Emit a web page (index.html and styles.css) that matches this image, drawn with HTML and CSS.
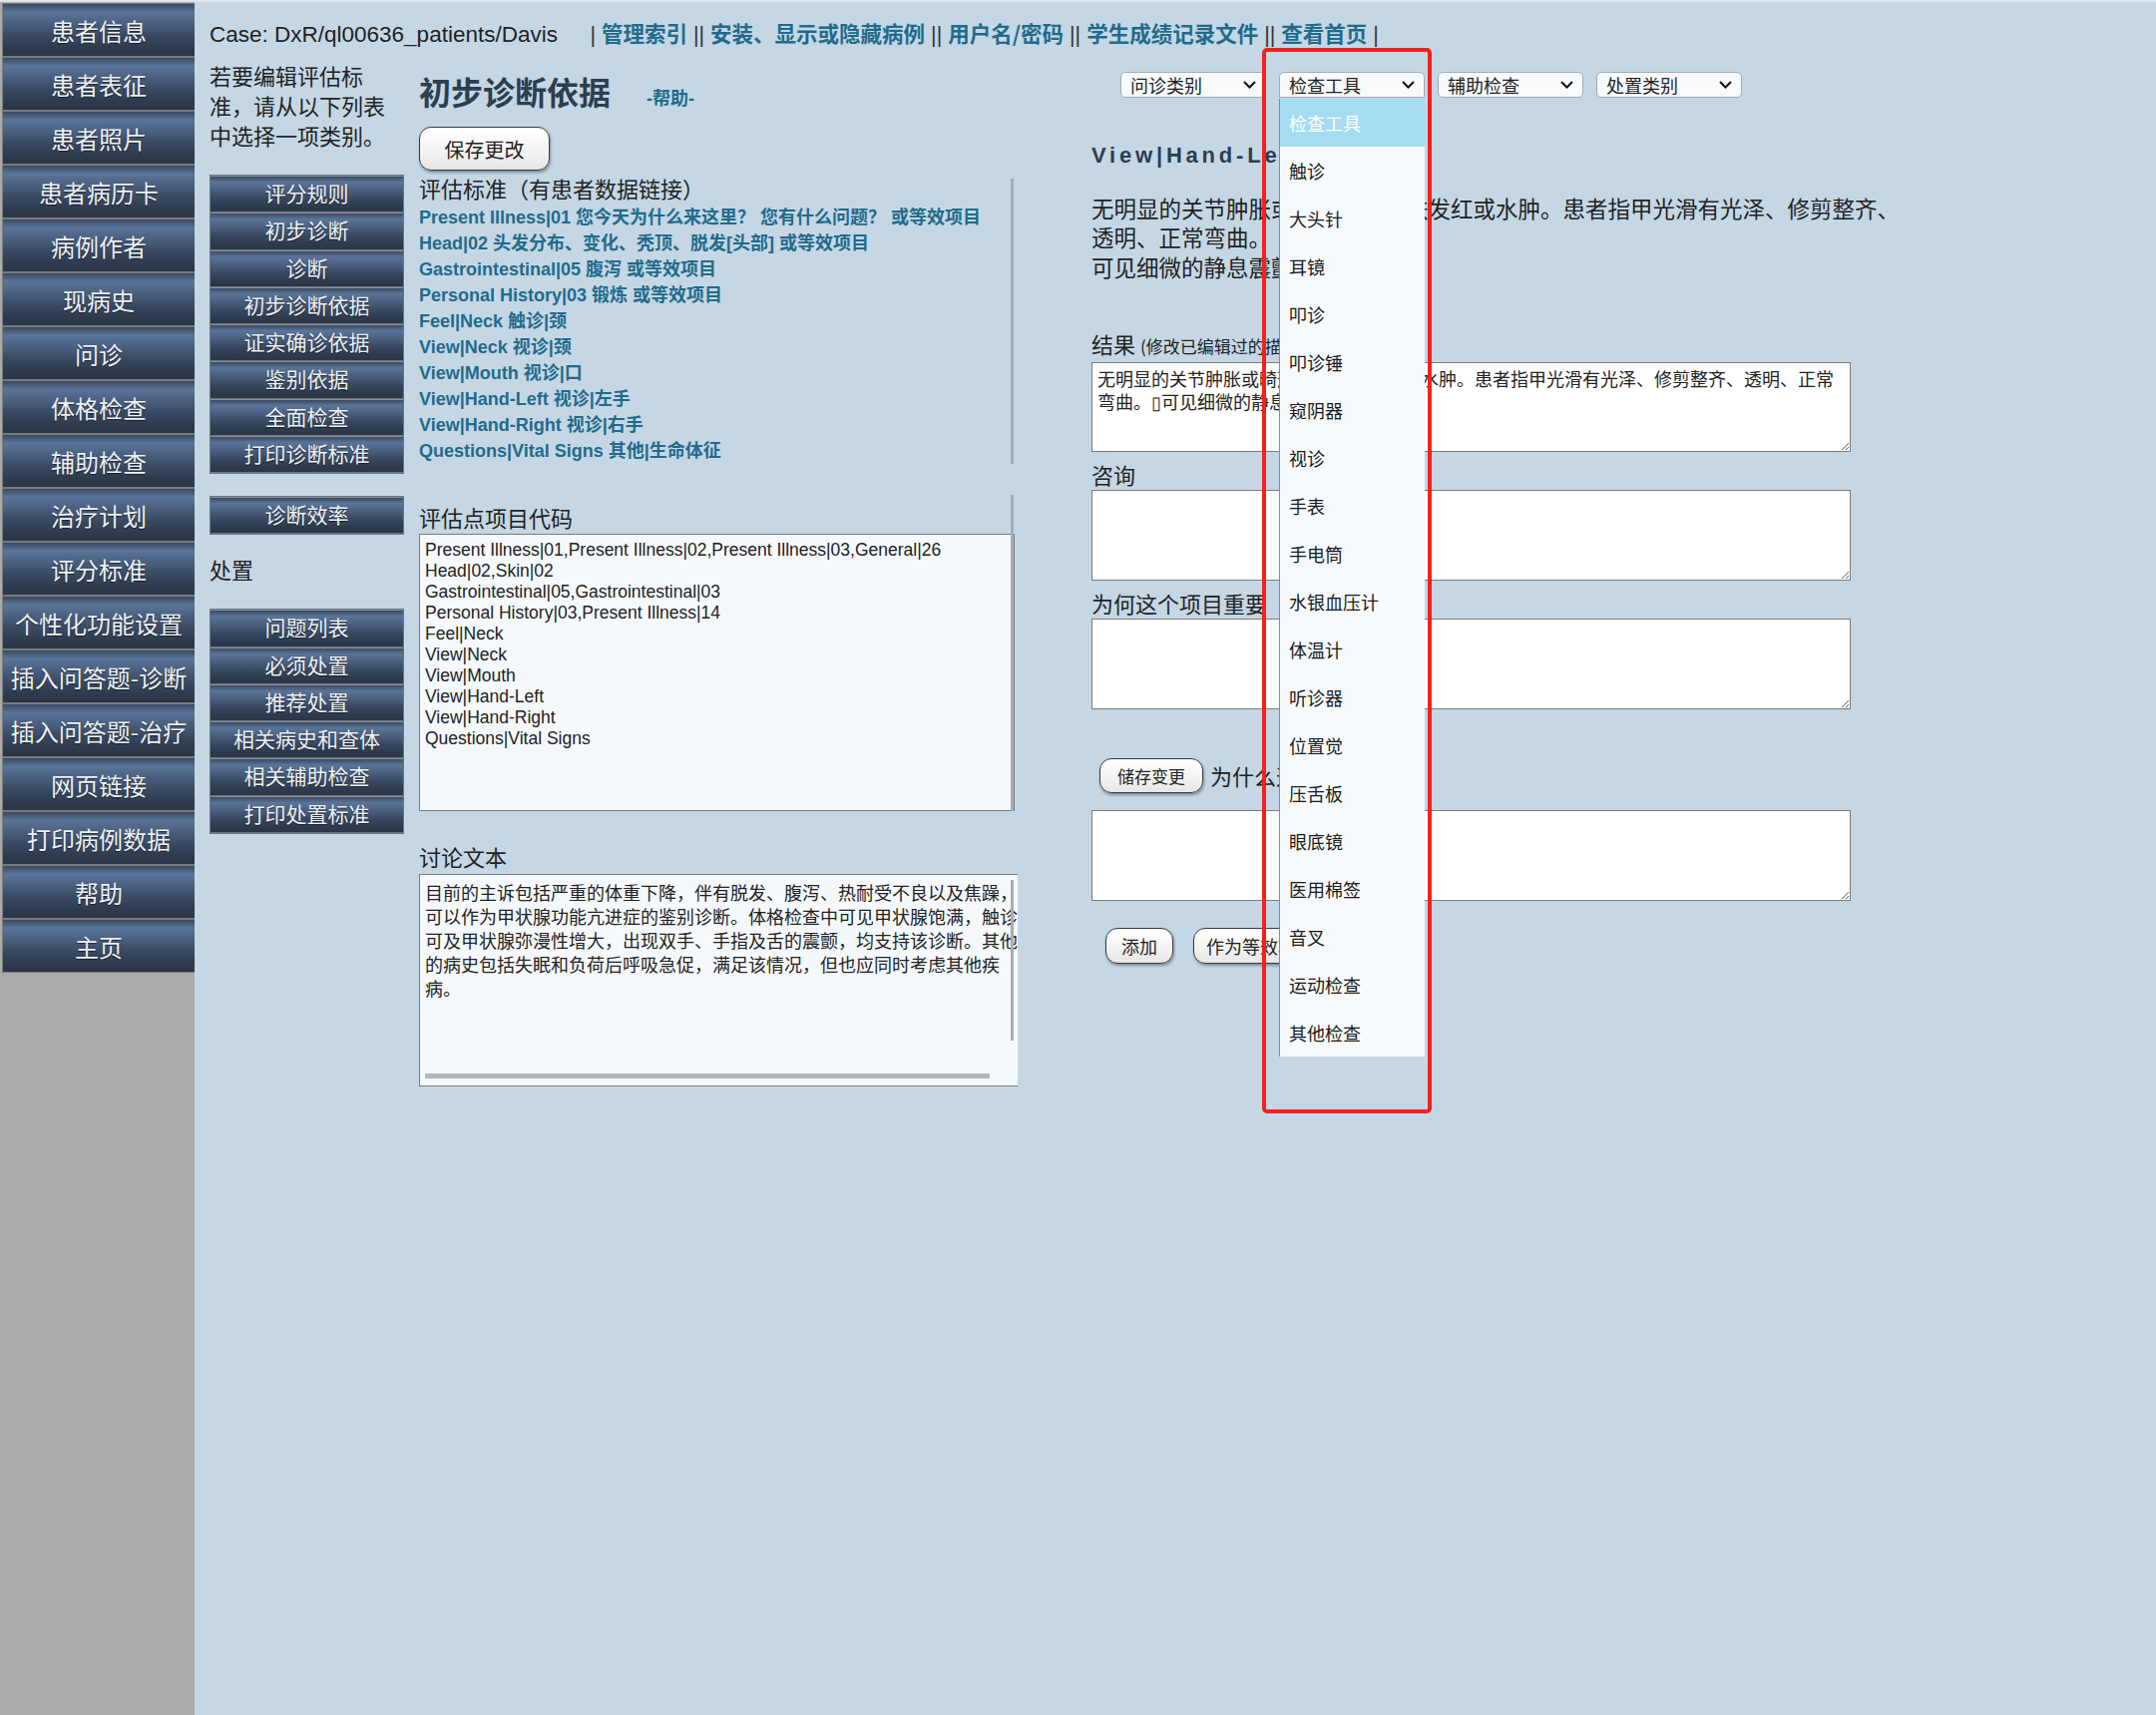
FILE: index.html
```html
<!DOCTYPE html>
<html lang="zh-CN">
<head>
<meta charset="utf-8">
<title>初步诊断依据</title>
<link rel="stylesheet" href="styles.css">
</head>
<body>
<div class="page">
  <nav class="sidebar">
    <a class="side-btn">患者信息</a>
    <a class="side-btn">患者表征</a>
    <a class="side-btn">患者照片</a>
    <a class="side-btn">患者病历卡</a>
    <a class="side-btn">病例作者</a>
    <a class="side-btn">现病史</a>
    <a class="side-btn">问诊</a>
    <a class="side-btn">体格检查</a>
    <a class="side-btn">辅助检查</a>
    <a class="side-btn">治疗计划</a>
    <a class="side-btn">评分标准</a>
    <a class="side-btn">个性化功能设置</a>
    <a class="side-btn">插入问答题-诊断</a>
    <a class="side-btn">插入问答题-治疗</a>
    <a class="side-btn">网页链接</a>
    <a class="side-btn">打印病例数据</a>
    <a class="side-btn">帮助</a>
    <a class="side-btn">主页</a>
  </nav>

  <main class="main">
    <header class="topbar">
      <span class="case">Case: DxR/ql00636_patients/Davis</span>
      <span class="toplinks">| <a>管理索引</a> || <a>安装、显示或隐藏病例</a> || <a>用户名/密码</a> || <a>学生成绩记录文件</a> || <a>查看首页</a> |</span>
    </header>

    <div class="columns">
      <aside class="col-menu">
        <p class="intro">若要编辑评估标准，请从以下列表中选择一项类别。</p>
        <div class="menu-group">
          <a class="sub-btn">评分规则</a>
          <a class="sub-btn">初步诊断</a>
          <a class="sub-btn">诊断</a>
          <a class="sub-btn">初步诊断依据</a>
          <a class="sub-btn">证实确诊依据</a>
          <a class="sub-btn">鉴别依据</a>
          <a class="sub-btn">全面检查</a>
          <a class="sub-btn">打印诊断标准</a>
        </div>
        <div class="menu-group">
          <a class="sub-btn">诊断效率</a>
        </div>
        <div class="menu-label">处置</div>
        <div class="menu-group">
          <a class="sub-btn">问题列表</a>
          <a class="sub-btn">必须处置</a>
          <a class="sub-btn">推荐处置</a>
          <a class="sub-btn">相关病史和查体</a>
          <a class="sub-btn">相关辅助检查</a>
          <a class="sub-btn">打印处置标准</a>
        </div>
      </aside>

      <section class="col-edit">
        <div class="title-row">
          <h1 class="title">初步诊断依据</h1>
          <a class="help">-帮助-</a>
        </div>
        <button class="pill-btn save-btn">保存更改</button>

        <div class="sec sec-criteria">
          <div class="sec-title">评估标准（有患者数据链接）</div>
          <a class="crit">Present Illness|01 您今天为什么来这里？ 您有什么问题？ 或等效项目</a>
          <a class="crit">Head|02 头发分布、变化、秃顶、脱发[头部] 或等效项目</a>
          <a class="crit">Gastrointestinal|05 腹泻 或等效项目</a>
          <a class="crit">Personal History|03 锻炼 或等效项目</a>
          <a class="crit">Feel|Neck 触诊|颈</a>
          <a class="crit">View|Neck 视诊|颈</a>
          <a class="crit">View|Mouth 视诊|口</a>
          <a class="crit">View|Hand-Left 视诊|左手</a>
          <a class="crit">View|Hand-Right 视诊|右手</a>
          <a class="crit">Questions|Vital Signs 其他|生命体征</a>
        </div>

        <div class="sec sec-codes">
          <div class="sec-label">评估点项目代码</div>
          <textarea class="codes">Present Illness|01,Present Illness|02,Present Illness|03,General|26
Head|02,Skin|02
Gastrointestinal|05,Gastrointestinal|03
Personal History|03,Present Illness|14
Feel|Neck
View|Neck
View|Mouth
View|Hand-Left
View|Hand-Right
Questions|Vital Signs</textarea>
        </div>

        <div class="sec sec-discuss">
          <div class="sec-label">讨论文本</div>
          <div class="discuss">
            <div class="discuss-text">
              <div>目前的主诉包括严重的体重下降，伴有脱发、腹泻、热耐受不良以及焦躁，</div>
              <div>可以作为甲状腺功能亢进症的鉴别诊断。体格检查中可见甲状腺饱满，触诊</div>
              <div>可及甲状腺弥漫性增大，出现双手、手指及舌的震颤，均支持该诊断。其他</div>
              <div>的病史包括失眠和负荷后呼吸急促，满足该情况，但也应同时考虑其他疾</div>
              <div>病。</div>
            </div>
            <div class="hbar"></div>
          </div>
        </div>
      </section>

      <section class="col-detail">
        <div class="select-row">
          <div class="fake-select"><span>问诊类别</span><svg width="13" height="8" viewBox="0 0 13 8"><path d="M1 1l5.5 5.5L12 1" fill="none" stroke="#111" stroke-width="2"/></svg></div>
          <div class="fake-select open"><span>检查工具</span><svg width="13" height="8" viewBox="0 0 13 8"><path d="M1 1l5.5 5.5L12 1" fill="none" stroke="#111" stroke-width="2"/></svg>
            <ul class="dropdown">
              <li class="active">检查工具</li>
              <li>触诊</li>
              <li>大头针</li>
              <li>耳镜</li>
              <li>叩诊</li>
              <li>叩诊锤</li>
              <li>窥阴器</li>
              <li>视诊</li>
              <li>手表</li>
              <li>手电筒</li>
              <li>水银血压计</li>
              <li>体温计</li>
              <li>听诊器</li>
              <li>位置觉</li>
              <li>压舌板</li>
              <li>眼底镜</li>
              <li>医用棉签</li>
              <li>音叉</li>
              <li>运动检查</li>
              <li>其他检查</li>
            </ul>
            <div class="annot"></div>
          </div>
          <div class="fake-select"><span>辅助检查</span><svg width="13" height="8" viewBox="0 0 13 8"><path d="M1 1l5.5 5.5L12 1" fill="none" stroke="#111" stroke-width="2"/></svg></div>
          <div class="fake-select"><span>处置类别</span><svg width="13" height="8" viewBox="0 0 13 8"><path d="M1 1l5.5 5.5L12 1" fill="none" stroke="#111" stroke-width="2"/></svg></div>
        </div>

        <h2 class="item-title">View|Hand-Left 视诊|左手</h2>
        <p class="item-desc">无明显的关节肿胀或畸形，无皮肤发红或水肿。患者指甲光滑有光泽、修剪整齐、透明、正常弯曲。<br>可见细微的静息震颤。</p>

        <div class="f-label label-result">结果 <small>(修改已编辑过的描述)</small></div>
        <textarea class="field h90">无明显的关节肿胀或畸形，无皮肤发红或水肿。患者指甲光滑有光泽、修剪整齐、透明、正常
弯曲。▯可见细微的静息震颤。</textarea>

        <div class="f-label">咨询</div>
        <textarea class="field h91"></textarea>

        <div class="f-label">为何这个项目重要</div>
        <textarea class="field h91"></textarea>

        <div class="btn-row row-save">
          <button class="pill-btn small-btn store-btn">储存变更</button>
          <span class="why">为什么这很重要</span>
        </div>
        <textarea class="field h91 after-save"></textarea>

        <div class="btn-row row-add">
          <button class="pill-btn small-btn add-btn">添加</button>
          <button class="pill-btn small-btn equiv-btn">作为等效项目添加</button>
        </div>
      </section>
    </div>
  </main>
</div>
</body>
</html>
```

FILE: styles.css
```css
* { box-sizing: border-box; }

html, body {
  margin: 0;
  padding: 0;
}

body {
  font-family: "Liberation Sans", "Noto Sans CJK SC", sans-serif;
  color: #222;
  background: #c5d7e5;
}

.page {
  display: flex;
  min-height: 1719px;
  border-top: 2px solid #e1e6eb;
}

/* ---------- left sidebar ---------- */
.sidebar {
  width: 195px;
  flex: none;
  background: #aaaaaa;
  padding: 1px 0 0 2px;
  display: flex;
  flex-direction: column;
}

.side-btn,
.sub-btn {
  display: flex;
  align-items: center;
  justify-content: center;
  color: #eef1f5;
  text-shadow: 0 1px 1px rgba(0, 0, 0, 0.55);
  font-family: "Noto Sans CJK SC", sans-serif;
  background: linear-gradient(to bottom,
    #3b4961 0%,
    #5a7599 16%,
    #4d6384 34%,
    #3a4a63 60%,
    #2e3a4e 85%,
    #2b3647 100%);
  white-space: nowrap;
}

.side-btn {
  height: 54px;
  font-size: 24px;
  border: 1px solid #7b7b7b;
  border-right: none;
}

/* ---------- main ---------- */
.main {
  flex: 1;
  padding-left: 15px;
}

.topbar {
  height: 46px;
  padding-top: 17px;
  line-height: 28px;
  white-space: nowrap;
}

.case {
  font-size: 22.5px;
  color: #222;
}

.toplinks {
  margin-left: 28px;
  font-size: 21.5px;
  color: #333;
}

.toplinks a {
  font-weight: bold;
  color: #1f6b8c;
  font-family: "Noto Sans CJK SC", sans-serif;
}

.columns {
  display: flex;
  align-items: flex-start;
  margin-top: 15px;
}

/* ---------- column: category menu ---------- */
.col-menu {
  width: 195px;
  flex: none;
  margin-right: 15px;
}

.intro {
  margin: 0;
  font-size: 22px;
  line-height: 30px;
  color: #222;
}

.menu-group {
  margin-top: 22px;
  border: 1px solid #6c7686;
}

.sub-btn {
  height: 37.25px;
  padding-bottom: 3px;
  font-size: 21px;
  border-top: 1px solid #8a8f96;
  border-bottom: 1px solid #6d7480;
}

.menu-label {
  margin-top: 22px;
  font-size: 22px;
  line-height: 30px;
}

/* ---------- column: editor ---------- */
.col-edit {
  width: 600px;
  flex: none;
  margin-right: 74px;
}

.title-row {
  display: flex;
  align-items: baseline;
  margin-top: 8px;
}

.title {
  margin: 0;
  font-size: 32px;
  line-height: 40px;
  font-weight: bold;
  color: #2c3e50;
  font-family: "Noto Sans CJK SC", sans-serif;
}

.help {
  margin-left: 36px;
  font-size: 18px;
  font-weight: bold;
  color: #1f6b8c;
}

.pill-btn {
  display: flex;
  align-items: center;
  justify-content: center;
  padding: 0;
  border: 1px solid #3a3a3a;
  border-radius: 12px;
  background: linear-gradient(to bottom, #ffffff 0%, #f4f4f4 55%, #e6e6e6 100%);
  box-shadow: 1px 2px 3px rgba(0, 0, 0, 0.35);
  color: #222;
  font-family: "Noto Sans CJK SC", sans-serif;
}

.save-btn {
  margin-top: 16px;
  width: 131px;
  height: 44px;
  font-size: 20px;
}

.sec {
  position: relative;
}

.sec::after {
  content: "";
  position: absolute;
  right: 4px;
  top: 0;
  bottom: 0;
  width: 3px;
  background: #a9acb0;
}

.sec-criteria {
  margin-top: 8px;
}

.sec-title {
  font-size: 22px;
  line-height: 24px;
  margin-bottom: 2px;
  color: #222;
}

.crit {
  display: block;
  font-size: 18px;
  line-height: 26px;
  font-weight: bold;
  color: #1f6b8c;
  white-space: nowrap;
}

.sec-codes {
  margin-top: 31px;
  padding-top: 11px;
}

.sec-label {
  font-size: 22px;
  line-height: 28px;
  color: #222;
}

.codes {
  display: block;
  margin: 0;
  width: 597px;
  height: 278px;
  padding: 5px 5px;
  border: 1px solid #7a7a7a;
  background: #f5f9fc;
  font-family: "Liberation Sans", "Noto Sans CJK SC", sans-serif;
  font-size: 17.5px;
  line-height: 21px;
  color: #222;
  resize: none;
  overflow: hidden;
}

.sec-discuss {
  margin-top: 34px;
}

.sec-discuss::after {
  top: 35px;
  bottom: auto;
  height: 161px;
}

.discuss {
  margin-top: 1px;
  width: 600px;
  height: 213px;
  border: 1px solid #7a7a7a;
  border-right: none;
  background: #f5f9fc;
  overflow: hidden;
  display: flex;
  flex-direction: column;
}

.discuss-text {
  padding: 5px 0 0 5px;
  font-family: "Noto Sans CJK SC", sans-serif;
  font-size: 18px;
  line-height: 24px;
  white-space: nowrap;
  color: #222;
}

.hbar {
  margin-top: auto;
  margin-bottom: 7px;
  margin-left: 5px;
  width: 566px;
  height: 5px;
  background: #b5b7ba;
}

/* ---------- column: detail ---------- */
.col-detail {
  width: 820px;
  flex: none;
}

.select-row {
  display: flex;
  gap: 13px;
  margin-top: 9px;
  padding-left: 29px;
}

.fake-select {
  position: relative;
  width: 146px;
  height: 26px;
  display: flex;
  align-items: center;
  justify-content: space-between;
  padding: 0 9px 0 9px;
  border: 1px solid #a3abb5;
  border-radius: 5px;
  background: #f8fafc;
  font-family: "Noto Sans CJK SC", sans-serif;
  font-size: 18px;
  color: #222;
}

.fake-select.open {
  border-radius: 5px 5px 0 0;
}

.dropdown {
  position: absolute;
  left: -1px;
  top: calc(100% + 2px);
  width: 146px;
  margin: 0;
  padding: 0;
  list-style: none;
  background: #f6fafd;
  border-left: 1px solid #8a8a8a;
  z-index: 5;
}

.dropdown li {
  height: 48px;
  line-height: 48px;
  padding-left: 9px;
  font-size: 18px;
  color: #1a1a1a;
}

.dropdown li.active {
  background: #a6dcf2;
  color: #ffffff;
}

.annot {
  position: absolute;
  left: -18px;
  top: -25px;
  width: 170px;
  height: 1068px;
  border: 4px solid #f1221c;
  border-radius: 5px;
  z-index: 6;
}

.item-title {
  margin: 43px 0 0;
  font-size: 22px;
  line-height: 30px;
  font-weight: bold;
  letter-spacing: 3.8px;
  color: #2c3e50;
  white-space: nowrap;
}

.item-desc {
  margin: 22.5px 0 0;
  font-family: "Noto Sans CJK SC", sans-serif;
  font-size: 22.5px;
  line-height: 29.5px;
  color: #222;
}

.f-label {
  margin-top: 8px;
  font-family: "Noto Sans CJK SC", sans-serif;
  font-size: 22px;
  line-height: 28px;
  color: #222;
}

.f-label small {
  font-size: 17px;
}

.label-result {
  margin-top: 48px;
}

.field {
  display: block;
  margin: 2px 0 0;
  width: 761px;
  padding: 4px 5px;
  border: 1px solid #7a7a7a;
  background: #ffffff;
  font-family: "Noto Sans CJK SC", sans-serif;
  font-size: 18px;
  line-height: 23px;
  color: #222;
  overflow: hidden;
}

.h90 { height: 90px; }
.h91 { height: 91px; }

.btn-row {
  display: flex;
  align-items: center;
  height: 36px;
}

.row-save {
  margin-top: 48px;
}

.small-btn {
  height: 35px;
  font-size: 17px;
}

.store-btn {
  margin-left: 8px;
  width: 104px;
}

.why {
  margin-left: 7px;
  font-family: "Noto Sans CJK SC", sans-serif;
  font-size: 22px;
}

.after-save {
  margin-top: 17px;
}

.row-add {
  margin-top: 27px;
}

.add-btn {
  margin-left: 14px;
  width: 68px;
  height: 36px;
  font-size: 18px;
}

.equiv-btn {
  margin-left: 20px;
  width: 170px;
  height: 36px;
  font-size: 18px;
}
```
